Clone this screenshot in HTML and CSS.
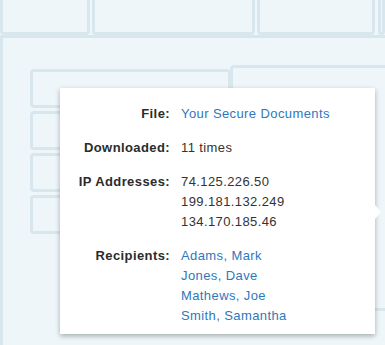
FILE: index.html
```html
<!DOCTYPE html>
<html lang="en">
<head>
  <meta charset="UTF-8" />
  <meta name="viewport" content="width=device-width, initial-scale=1.0" />
  <title>File details</title>
  <link rel="stylesheet" href="styles.css">
</head>
<body>
  <div class="toprow">
    <div class="tab tab-a"></div>
    <div class="tab tab-b"></div>
    <div class="tab tab-c"></div>
    <div class="tab tab-d"></div>
  </div>

  <div class="panel">
    <div class="column">
      <div class="slot"></div>
      <div class="slot"></div>
      <div class="slot"></div>
      <div class="slot"></div>
    </div>
    <div class="sheet"></div>
  </div>

  <div class="popover">
    <div class="details">
      <div class="label">File:</div>
      <div class="value"><a href="#">Your Secure Documents</a></div>

      <div class="label">Downloaded:</div>
      <div class="value">11 times</div>

      <div class="label">IP Addresses:</div>
      <div class="value">
        74.125.226.50<br>
        199.181.132.249<br>
        134.170.185.46
      </div>

      <div class="label">Recipients:</div>
      <div class="value">
        <a href="#">Adams, Mark</a><br>
        <a href="#">Jones, Dave</a><br>
        <a href="#">Mathews, Joe</a><br>
        <a href="#">Smith, Samantha</a>
      </div>
    </div>
  </div>
</body>
</html>
```

FILE: styles.css
```css
body {
  margin: 0;
  width: 385px;
  height: 345px;
  overflow: hidden;
  background: #eef6f9;
  font-family: 'Liberation Sans', Arial, Helvetica, sans-serif;
  position: relative;
}

/* faded app behind the popover */
.toprow {
  display: flex;
  gap: 2px;
  height: 35px;
}
.tab {
  box-sizing: border-box;
  height: 35px;
  border: 3px solid #d8e7ed;
  border-top: none;
  border-radius: 0 0 4px 4px;
}
.tab-a { width: 90px; }
.tab-b { width: 163px; }
.tab-c { width: 118px; }
.tab-d { flex: 1; margin-left: 1px; }

.panel {
  display: flex;
  align-items: flex-start;
  border-top: 3px solid #d8e7ed;
  border-left: 3px solid #d8e7ed;
  padding: 31px 0 0 27px;
  height: 276px;
}
.column {
  display: flex;
  flex-direction: column;
  gap: 3px;
}
.slot {
  box-sizing: border-box;
  width: 201px;
  height: 39px;
  border: 3px solid #d8e7ed;
  border-radius: 4px;
}
.sheet {
  flex: 1;
  height: 240px;
  margin: -4px 0 0 -1px;
  border: 3px solid #d8e7ed;
  border-right: none;
  border-radius: 4px 0 0 4px;
}

/* popover */
.popover {
  position: absolute;
  left: 60px;
  top: 88px;
  width: 315px;
  height: 246px;
  background: #fff;
  box-shadow: 0 2px 5px rgba(0, 0, 0, 0.3);
}
.popover::after {
  content: '';
  position: absolute;
  right: -6px;
  top: 117px;
  border-left: 6px solid #fff;
  border-top: 7px solid transparent;
  border-bottom: 7px solid transparent;
}
.details {
  display: grid;
  grid-template-columns: 110px auto;
  column-gap: 11px;
  row-gap: 14px;
  padding-top: 16px;
  font-size: 13px;
  line-height: 20px;
  letter-spacing: 0.4px;
  color: #333;
}
.label {
  text-align: right;
  font-weight: bold;
  color: #2b2b2b;
}
.value a {
  color: #2f78bb;
  text-decoration: none;
}
```
